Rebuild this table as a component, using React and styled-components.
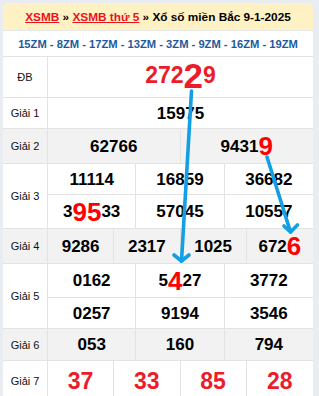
import React from 'react';
import styled, { createGlobalStyle } from 'styled-components';

const GlobalStyle = createGlobalStyle`
  html, body {
    margin: 0;
    padding: 0;
    background: #e9ecf1;
  }
  body {
    font-family: "Liberation Sans", Arial, sans-serif;
  }
`;

const Page = styled.div`
  position: relative;
  width: 319px;
  height: 396px;
  padding: 3px 0 0 3px;
  box-sizing: border-box;
  overflow: hidden;
`;

const Card = styled.div`
  width: 310px;
  background: #ffffff;
  border-radius: 6px 6px 0 0;
  overflow: hidden;
`;

const Title = styled.div`
  height: 27px;
  display: flex;
  align-items: center;
  justify-content: center;
  background: #fef1c4;
  border-bottom: 1px solid #e6e6e6;
  font-size: 11.8px;
  font-weight: bold;
  color: #000000;
  white-space: nowrap;

  a {
    color: #e8141c;
    text-decoration: underline;
  }
`;

const Codes = styled.div`
  height: 25px;
  display: flex;
  align-items: center;
  justify-content: center;
  border-bottom: 1px solid #e3e3e3;
  font-size: 11.2px;
  font-weight: bold;
  color: #1d5a9c;
  white-space: nowrap;
`;

const Row = styled.div`
  display: flex;
  height: ${(p) => p.h}px;
  background: ${(p) => (p.alt ? '#f2f2f2' : '#ffffff')};
  border-bottom: 1px solid #e3e3e3;
`;

const Label = styled.div`
  width: 44px;
  flex-shrink: 0;
  display: flex;
  align-items: center;
  justify-content: center;
  border-right: 1px solid #e3e3e3;
  font-size: 11px;
  color: #111111;
`;

const Cells = styled.div`
  flex: 1;
  display: grid;
  grid-template-columns: repeat(${(p) => p.cols}, 1fr);
  grid-template-rows: ${(p) => p.rows};
`;

const Cell = styled.div`
  display: flex;
  align-items: center;
  justify-content: center;
  padding-bottom: ${(p) => p.lift || 0}px;
  font-size: ${(p) => p.size || 17}px;
  font-weight: bold;
  line-height: 1;
  color: ${(p) => (p.red ? '#ec1c2a' : '#000000')};
  white-space: nowrap;

  &:not(:nth-child(${(p) => p.cols}n)) {
    border-right: 1px solid #e3e3e3;
  }
  &:nth-child(-n + ${(p) => p.cols}) {
    border-bottom: ${(p) => (p.split ? '1px solid #e3e3e3' : 'none')};
  }
`;

const Big = styled.span`
  font-size: ${(p) => p.size || 26}px;
  color: ${(p) => p.color || '#ff0000'};
`;

const Arrows = styled.svg`
  position: absolute;
  top: 0;
  left: 0;
  pointer-events: none;
`;

const Prize = ({ label, h, alt, cols = 1, rows, items, size, red, lift }) => {
  const split = rows && rows.split(' ').length > 1;
  return (
    <Row h={h} alt={alt}>
      <Label>{label}</Label>
      <Cells cols={cols} rows={rows || '1fr'}>
        {items.map((it, i) => (
          <Cell key={i} cols={cols} split={split} size={size} red={red} lift={lift}>
            {it}
          </Cell>
        ))}
      </Cells>
    </Row>
  );
};

const App = () => (
  <Page>
    <GlobalStyle />
    <Card>
      <Title>
        <a>XSMB</a>&nbsp;»&nbsp;<a>XSMB thứ 5</a>&nbsp;» Xổ số miền Bắc 9-1-2025
      </Title>
      <Codes>15ZM - 8ZM - 17ZM - 13ZM - 3ZM - 9ZM - 16ZM - 19ZM</Codes>
      <Prize
        label="ĐB"
        h={40}
        size={23}
        red
        lift={3}
        items={[
          <>
            272<Big size={35} color="#ec1c2a">2</Big>9
          </>,
        ]}
      />
      <Prize label="Giải 1" h={30} items={['15975']} />
      <Prize
        label="Giải 2"
        h={34}
        alt
        cols={2}
        items={[
          '62766',
          <>
            9431<Big>9</Big>
          </>,
        ]}
      />
      <Prize
        label="Giải 3"
        h={64}
        cols={3}
        rows="31px 1fr"
        items={[
          '11114',
          '16859',
          '36682',
          <>
            3<Big>95</Big>33
          </>,
          '57045',
          '10557',
        ]}
      />
      <Prize
        label="Giải 4"
        h={34}
        alt
        cols={4}
        items={[
          '9286',
          '2317',
          '1025',
          <>
            672<Big>6</Big>
          </>,
        ]}
      />
      <Prize
        label="Giải 5"
        h={64}
        cols={3}
        rows="34px 1fr"
        items={[
          '0162',
          <>
            5<Big>4</Big>27
          </>,
          '3772',
          '0257',
          '9194',
          '3546',
        ]}
      />
      <Prize label="Giải 6" h={31} alt cols={3} items={['053', '160', '794']} />
      <Prize label="Giải 7" h={40} cols={4} size={23} red items={['37', '33', '85', '28']} />
    </Card>
    <Arrows width="319" height="396" viewBox="0 0 319 396">
      <g fill="none" stroke="#129fe3" strokeWidth="3.6" strokeLinecap="round" strokeLinejoin="round">
        <path d="M191.5 91 L181.5 261" />
        <path d="M174 255 L181.5 261 L189 255" />
        <path d="M267 157 L290.5 232" />
        <path d="M284 226 L290.5 232 L297.5 225" />
      </g>
    </Arrows>
  </Page>
);

export default App;
